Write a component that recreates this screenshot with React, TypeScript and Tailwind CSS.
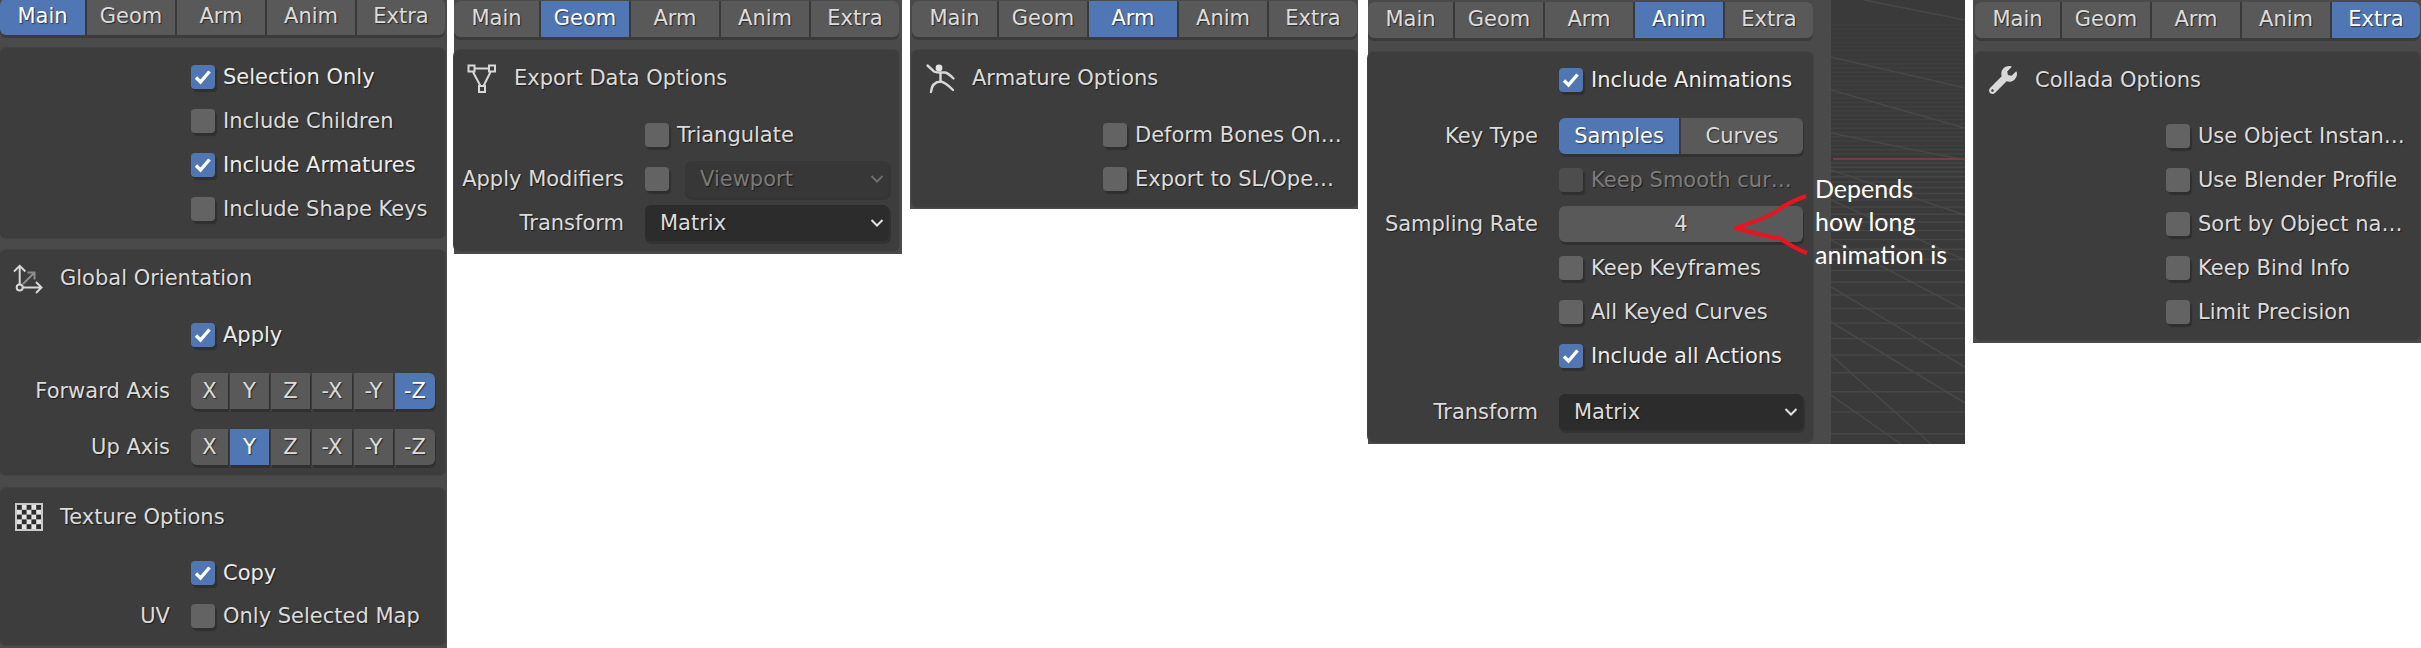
import React from "react";
import { FaWrench } from "react-icons/fa";

const TAB_NAMES = ["Main", "Geom", "Arm", "Anim", "Extra"];

function Tabs({ active, className }: { active: number; className: string }) {
  return (
    <div className={`flex gap-[2px] w-[445px] h-[36px] rounded-[6px] bg-[#393939] shadow-[0_3px_0_#3b3b3b] ${className}`}>
      {TAB_NAMES.map((name, i) => (
        <div
          key={name}
          className={`flex items-center justify-center h-full pb-[1px] ${i === 0 ? "w-[85px] rounded-l-[6px]" : "w-[88px]"} ${i === 4 ? "rounded-r-[6px]" : ""} ${i === active ? "bg-[#5076b3] text-white" : "bg-[#595959] text-[#dcdcdc]"}`}
        >
          {name}
        </div>
      ))}
    </div>
  );
}

function Section({ className, children }: { className: string; children: React.ReactNode }) {
  return (
    <div className={`flex flex-col w-[445px] rounded-[6px] bg-[#3d3d3d] shadow-[0_0_0_1px_#434343] ${className}`}>
      {children}
    </div>
  );
}

function Row({ label, className = "", children }: { label?: string; className?: string; children: React.ReactNode }) {
  return (
    <div className={`flex items-center h-[36px] ${className}`}>
      <div className="w-[170px] mr-[21px] text-right text-[#dcdcdc] whitespace-nowrap">{label}</div>
      {children}
    </div>
  );
}

function Check({ label, checked, muted, rowLabel, className }: { label: string; checked?: boolean; muted?: boolean; rowLabel?: string; className?: string }) {
  return (
    <Row label={rowLabel} className={className}>
      <CheckBox checked={checked} muted={muted} />
      <span className={`ml-[8px] whitespace-nowrap ${muted ? "text-[#7d7d7d]" : checked ? "text-[#ececec]" : "text-[#dcdcdc]"}`}>{label}</span>
    </Row>
  );
}

function CheckBox({ checked, muted }: { checked?: boolean; muted?: boolean }) {
  return (
    <div
      className={`flex items-center justify-center w-[24px] h-[24px] rounded-[4px] shadow-[2px_3px_1px_rgba(0,0,0,0.22)] ${checked ? "bg-[#5076b3]" : muted ? "bg-[#4d4d4d]" : "bg-[#636363]"}`}
    >
      {checked && (
        <svg width="24" height="24" viewBox="0 0 24 24" fill="none">
          <polyline points="5,12.5 9.5,17 18.5,6.5" stroke="#fff" strokeWidth="3.4" />
        </svg>
      )}
    </div>
  );
}

function Chevron({ color }: { color: string }) {
  return (
    <svg width="14" height="10" viewBox="0 0 14 10" fill="none">
      <polyline points="1.5,2 7,7.5 12.5,2" stroke={color} strokeWidth="2" />
    </svg>
  );
}

function Dropdown({ value }: { value: string }) {
  return (
    <div className="flex items-center justify-between w-[244px] h-[36px] pl-[15px] pr-[5px] rounded-[6px] bg-[#2c2c2c] text-[#dcdcdc] shadow-[1px_2px_0_1px_rgba(0,0,0,0.18)]">
      <span>{value}</span>
      <Chevron color="#e2e2e2" />
    </div>
  );
}

const AXES = [
  { name: "X", cls: "w-[37px] rounded-l-[6px]" },
  { name: "Y", cls: "w-[39px]" },
  { name: "Z", cls: "w-[39px]" },
  { name: "-X", cls: "w-[40px]" },
  { name: "-Y", cls: "w-[39px]" },
  { name: "-Z", cls: "w-[40px] rounded-r-[6px]" },
];

function AxisRow({ label, active, className }: { label: string; active: number; className: string }) {
  return (
    <Row label={label} className={className}>
      <div className="flex gap-[2px]">
        {AXES.map((a, i) => (
          <div
            key={a.name}
            className={`flex items-center justify-center h-[36px] shadow-[1px_3px_0_rgba(0,0,0,0.2)] ${a.cls} ${i === active ? "bg-[#5076b3] text-white" : "bg-[#595959] text-[#dcdcdc]"}`}
          >
            {a.name}
          </div>
        ))}
      </div>
    </Row>
  );
}

function Header({ icon, title, className = "" }: { icon: React.ReactNode; title: string; className?: string }) {
  return (
    <div className={`flex items-center h-[36px] pl-[8px] ${className}`}>
      <div className="flex items-center justify-center w-[44px] h-[40px]">{icon}</div>
      <span className="ml-[8px] text-[#dcdcdc]">{title}</span>
    </div>
  );
}

const AxesIcon = (
  <svg width="44" height="40" viewBox="0 0 44 40" fill="none" stroke="#d8d8d8" strokeWidth="2">
    <path d="M11.7 26V8M6 13.5l5.7-5.7 5.7 5.7" />
    <path d="M15 29.5H33M28 24l5.5 5.5L28 35" />
    <circle cx="11.7" cy="29.5" r="3" />
    <path d="M15 26L26 15M19.5 14.5H26.5V21.5" stroke="#8c8c8c" />
  </svg>
);

const DataIcon = (
  <svg width="44" height="40" viewBox="0 0 44 40" fill="none" stroke="#d8d8d8" strokeWidth="2">
    <path d="M13 10.5H27M11 14L18.5 28M28.5 14L21.5 28" />
    <rect x="6.5" y="7.5" width="6" height="6" />
    <rect x="27" y="7.5" width="6" height="6" />
    <rect x="17" y="28" width="6" height="6" />
  </svg>
);

const ArmatureIcon = (
  <svg width="44" height="40" viewBox="0 0 44 40" fill="none" stroke="#d8d8d8" strokeWidth="2.4" strokeLinecap="round">
    <circle cx="19" cy="10" r="3.4" fill="#e4e4e4" stroke="none" />
    <path d="M7.5 7.5L14 13.5C17 15 21 14.5 25 14.5C28 15 31 18 33.5 20.5" />
    <path d="M20.5 15V23.5C15 24 11.5 27 11 34" />
    <path d="M20.5 23.5C25 24 29 28 33 32" />
  </svg>
);

const CheckerIcon = (
  <svg width="28" height="28" viewBox="0 0 28 28" className="-ml-[2px]">
    <rect width="28" height="28" fill="#c9c9c9" />
    <rect x="2" y="2" width="24" height="24" fill="#e4e4e4" />
    {[0, 1, 2, 3, 4].map((r) =>
      [0, 1, 2, 3, 4].map((c) =>
        (r + c) % 2 === 0 ? <rect key={`${r}-${c}`} x={2 + c * 4.8} y={2 + r * 4.8} width="4.8" height="4.8" fill="#2d2d2d" /> : null
      )
    )}
  </svg>
);

function Viewport() {
  const low: number[] = [];
  let y = 163;
  while (y < 444) {
    low.push(y);
    y += 4 + (y - 159) * 0.07;
  }
  const high: number[] = [];
  for (let v = 154; v > 24; v -= 4.3) high.push(v);
  const diag = [
    [0, 57, 134, 88],
    [33, 0, 134, 20],
    [0, 133, 134, 160],
    [0, 90, 134, 128],
    [0, 170, 134, 215],
    [0, 200, 134, 260],
    [0, 240, 134, 310],
    [0, 287, 134, 367],
    [0, 322, 134, 403],
    [0, 355, 100, 444],
    [0, 395, 70, 444],
  ];
  return (
    <svg width="134" height="444" viewBox="0 0 134 444" className="block flex-none bg-[#3a3a3a]">
      {high.map((v, i) => (
        <line key={`h${i}`} x1="0" x2="134" y1={v} y2={v} stroke="#424242" strokeWidth="1.5" opacity={0.3 + (v / 154) * 0.7} />
      ))}
      {low.map((v, i) => (
        <line key={`l${i}`} x1="0" x2="134" y1={v} y2={v} stroke="#464646" strokeWidth="1.5" />
      ))}
      {diag.map((d, i) => (
        <line key={`d${i}`} x1={d[0]} y1={d[1]} x2={d[2]} y2={d[3]} stroke="#484848" strokeWidth="1.5" />
      ))}
      <line x1="2" x2="134" y1="159" y2="159" stroke="#793b44" strokeWidth="2" />
    </svg>
  );
}

export default function App() {
  return (
    <div className="relative flex items-start w-[2421px] h-[648px] overflow-hidden bg-white font-['DejaVu_Sans',sans-serif] text-[21px] leading-none [text-shadow:1px_1px_1px_rgba(0,0,0,0.55)]">
      {/* Main */}
      <div className="flex-none w-[447px] h-[648px] overflow-hidden bg-[#4a4a4a]">
        <Tabs active={0} className="-mt-[1px]" />
        <Section className="mt-[13px] py-[11px] gap-[8px]">
          <Check label="Selection Only" checked />
          <Check label="Include Children" />
          <Check label="Include Armatures" checked />
          <Check label="Include Shape Keys" />
        </Section>
        <Section className="mt-[12px] pt-[10px] pb-[10px]">
          <Header icon={AxesIcon} title="Global Orientation" />
          <Check label="Apply" checked className="mt-[21px]" />
          <AxisRow label="Forward Axis" active={5} className="mt-[20px]" />
          <AxisRow label="Up Axis" active={1} className="mt-[20px]" />
        </Section>
        <Section className="mt-[13px] pt-[11px] pb-[11px]">
          <Header icon={CheckerIcon} title="Texture Options" />
          <Check label="Copy" checked className="mt-[20px]" />
          <Check label="Only Selected Map" rowLabel="UV" className="mt-[7px]" />
        </Section>
      </div>

      {/* Geom */}
      <div className="flex-none ml-[7px] w-[448px] h-[254px] pt-[1px] bg-[#4a4a4a]">
        <Tabs active={1} />
        <Section className="mt-[13px] pt-[10px] pb-[10px]">
          <Header icon={DataIcon} title="Export Data Options" />
          <Check label="Triangulate" className="mt-[21px]" />
          <Row label="Apply Modifiers" className="mt-[8px]">
            <CheckBox />
            <div className="flex items-center justify-between ml-[16px] w-[204px] h-[36px] pl-[15px] pr-[5px] rounded-[6px] bg-[#373737] text-[#7a7a7a] shadow-[1px_2px_0_1px_rgba(0,0,0,0.12)]">
              <span>Viewport</span>
              <Chevron color="#6e6e6e" />
            </div>
          </Row>
          <Row label="Transform" className="mt-[8px]">
            <Dropdown value="Matrix" />
          </Row>
        </Section>
      </div>

      {/* Arm */}
      <div className="flex-none ml-[8px] w-[448px] h-[209px] pl-[2px] pt-[1px] bg-[#4a4a4a]">
        <Tabs active={2} />
        <Section className="mt-[13px] pt-[10px] pb-[10px]">
          <Header icon={ArmatureIcon} title="Armature Options" />
          <Check label="Deform Bones On…" className="mt-[21px]" />
          <Check label="Export to SL/Ope…" className="mt-[8px]" />
        </Section>
      </div>

      {/* Anim */}
      <div className="flex-none flex ml-[10px] h-[444px]">
        <div className="w-[463px] h-full pt-[2px] bg-[#4a4a4a]">
          <Tabs active={3} />
          <Section className="mt-[14px] pt-[10px] pb-[12px]">
            <Check label="Include Animations" checked />
            <Row label="Key Type" className="mt-[20px]">
              <div className="flex gap-[2px] h-[36px] shadow-[1px_3px_0_rgba(0,0,0,0.18)] rounded-[6px]">
                <div className="flex items-center justify-center w-[120px] rounded-l-[6px] bg-[#5076b3] text-white">Samples</div>
                <div className="flex items-center justify-center w-[122px] rounded-r-[6px] bg-[#595959] text-[#dcdcdc]">Curves</div>
              </div>
            </Row>
            <Check label="Keep Smooth cur…" muted className="mt-[8px]" />
            <Row label="Sampling Rate" className="mt-[8px]">
              <div className="flex items-center justify-center w-[244px] h-[36px] rounded-[6px] bg-[#595959] text-[#dcdcdc] shadow-[1px_3px_0_rgba(0,0,0,0.2)]">4</div>
            </Row>
            <Check label="Keep Keyframes" className="mt-[8px]" />
            <Check label="All Keyed Curves" className="mt-[8px]" />
            <Check label="Include all Actions" checked className="mt-[8px]" />
            <Row label="Transform" className="mt-[20px]">
              <Dropdown value="Matrix" />
            </Row>
          </Section>
        </div>
        <Viewport />
      </div>

      {/* Extra */}
      <div className="flex-none ml-[8px] w-[448px] h-[343px] pl-[2px] pt-[2px] bg-[#4a4a4a]">
        <Tabs active={4} />
        <Section className="mt-[14px] pt-[10px] pb-[10px]">
          <Header icon={<FaWrench size={28} color="#d8d8d8" className="-ml-[4px]" />} title="Collada Options" />
          <Check label="Use Object Instan…" className="mt-[20px]" />
          <Check label="Use Blender Profile" className="mt-[8px]" />
          <Check label="Sort by Object na…" className="mt-[8px]" />
          <Check label="Keep Bind Info" className="mt-[8px]" />
          <Check label="Limit Precision" className="mt-[8px]" />
        </Section>
      </div>

      {/* Annotation */}
      <svg width="90" height="70" viewBox="0 0 90 70" fill="none" className="absolute left-[1725px] top-[190px]">
        <path d="M81 6C70 10 60 14 52 21C44 27 30 31 11 38C28 43 44 47 54 48C61 52 68 58 82 63" stroke="#e8141f" strokeWidth="4" strokeLinejoin="round" />
      </svg>
      <div className="absolute left-[1815px] top-[172px] font-['Lato',sans-serif] text-[25px] leading-[33px] text-white [text-shadow:none]">
        <div>Depends</div>
        <div>how long</div>
        <div>animation is</div>
      </div>
    </div>
  );
}
